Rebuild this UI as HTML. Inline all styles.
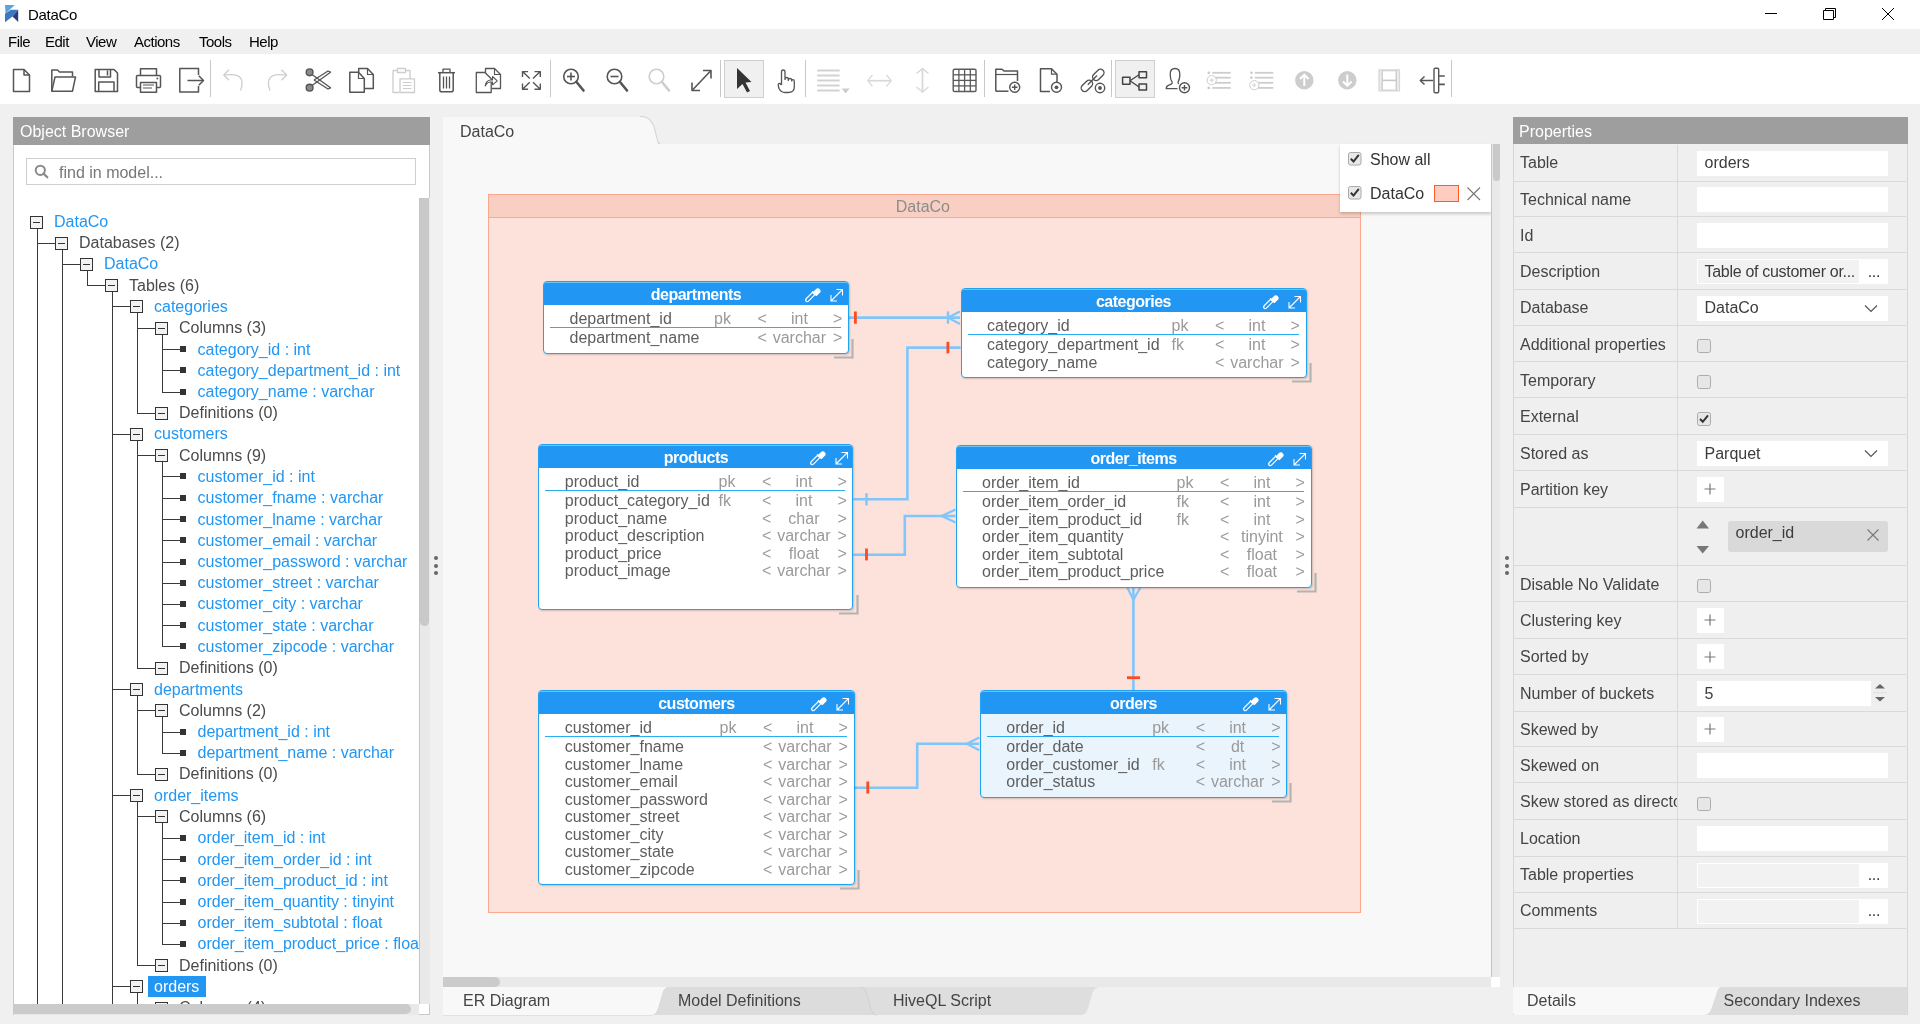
<!DOCTYPE html><html><head><meta charset="utf-8"><title>DataCo</title><style>html,body{margin:0;padding:0;width:1920px;height:1024px;overflow:hidden;background:#f0f0f0;font-family:"Liberation Sans",sans-serif}.r{position:absolute}.t{position:absolute;white-space:nowrap}svg{overflow:visible}</style></head><body><div id="root" style="position:absolute;left:0;top:0;width:1920px;height:1024px;will-change:transform">
<div class="r" style="left:0px;top:0px;width:1920px;height:29px;background:#fff"></div>
<svg class="r" style="left:4px;top:4px" width="18" height="20" viewBox="0 0 18 20">
<polygon points="1,1 10.8,1 1.5,9.5" fill="#5ba3d9"/>
<polygon points="1,9.8 6.8,5.8 14.2,5.8 8.5,12.5 1,18.2" fill="#3a78c0"/>
<polygon points="8.5,12.5 14.2,5.8 14.2,18" fill="#283c78"/>
</svg>
<div class="t" style="left:28px;top:5.00px;font-size:15px;line-height:20px;color:#000;letter-spacing:-0.3px;">DataCo</div>
<svg class="r" style="left:1740px;top:0px" width="180" height="29" viewBox="0 0 180 29">
<path d="M25,13.5 H37" stroke="#000" stroke-width="1"/>
<path d="M83.5,10.5 H93.5 V19.5 H83.5 Z" stroke="#000" stroke-width="1" fill="none"/>
<path d="M85.5,10.5 V8.5 H95.5 V17.5 H93.5" stroke="#000" stroke-width="1" fill="none"/>
<path d="M142,8 L154,20 M154,8 L142,20" stroke="#000" stroke-width="1"/>
</svg>
<div class="r" style="left:0px;top:29px;width:1920px;height:25px;background:#f0f0f0"></div>
<div class="t" style="left:8px;top:32.00px;font-size:15px;line-height:20px;color:#000;letter-spacing:-0.5px;">File</div>
<div class="t" style="left:45px;top:32.00px;font-size:15px;line-height:20px;color:#000;letter-spacing:-0.5px;">Edit</div>
<div class="t" style="left:86px;top:32.00px;font-size:15px;line-height:20px;color:#000;letter-spacing:-0.5px;">View</div>
<div class="t" style="left:134px;top:32.00px;font-size:15px;line-height:20px;color:#000;letter-spacing:-0.5px;">Actions</div>
<div class="t" style="left:199px;top:32.00px;font-size:15px;line-height:20px;color:#000;letter-spacing:-0.5px;">Tools</div>
<div class="t" style="left:249px;top:32.00px;font-size:15px;line-height:20px;color:#000;letter-spacing:-0.5px;">Help</div>
<div class="r" style="left:0px;top:54px;width:1920px;height:50px;background:#fff"></div>
<div class="r" style="left:724px;top:60px;width:40px;height:38px;background:#f0f0f0;border:1px solid #cfcfcf;box-sizing:border-box"></div>
<div class="r" style="left:1115px;top:60px;width:40px;height:38px;background:#f0f0f0;border:1px solid #cfcfcf;box-sizing:border-box"></div>
<svg class="r" style="left:0;top:0" width="1920" height="104" viewBox="0 0 1920 104"><path d="M210.5,60 V97" stroke="#c8c8c8" stroke-width="1"/><path d="M550.5,60 V97" stroke="#c8c8c8" stroke-width="1"/><path d="M720.5,60 V97" stroke="#c8c8c8" stroke-width="1"/><path d="M805.5,60 V97" stroke="#c8c8c8" stroke-width="1"/><path d="M984.5,60 V97" stroke="#c8c8c8" stroke-width="1"/><path d="M1111.5,60 V97" stroke="#c8c8c8" stroke-width="1"/><path d="M1451.5,60 V97" stroke="#c8c8c8" stroke-width="1"/><path d="M13.5,69.5 H24 L29.5,75 V91.5 H13.5 Z" stroke="#555" stroke-width="1.5" fill="none" stroke-linejoin="round" /><path d="M24,69.5 V75 H29.5" stroke="#555" stroke-width="1.5" fill="none" stroke-linejoin="round" /><path d="M51.8,91.2 V70 H57.5 L59.5,72 H72.5 V76.5" stroke="#555" stroke-width="1.5" fill="none" stroke-linejoin="round" /><path d="M51.8,91.2 L55,77 H75.5 L72.5,91.2 Z" stroke="#555" stroke-width="1.5" fill="none" stroke-linejoin="round" /><path d="M95.2,69.5 H114 L117.5,73 V91.5 H95.2 Z" stroke="#555" stroke-width="1.5" fill="none" stroke-linejoin="round" /><path d="M99,69.5 V77 H110.5 V69.5" stroke="#555" stroke-width="1.5" fill="none" stroke-linejoin="round" /><path d="M107.5,70.5 V75.5" stroke="#555" stroke-width="1.5" fill="none" stroke-linejoin="round" /><path d="M98.7,91.5 V82 H114 V91.5" stroke="#555" stroke-width="1.5" fill="none" stroke-linejoin="round" /><path d="M140.5,75 V68.8 H156.5 V75" stroke="#555" stroke-width="1.5" fill="none" stroke-linejoin="round" /><path d="M140.5,87.5 H137.5 Q136.5,87.5 136.5,86.5 V76.5 Q136.5,75.5 137.5,75.5 H159.5 Q160.5,75.5 160.5,76.5 V86.5 Q160.5,87.5 159.5,87.5 H156.5" stroke="#555" stroke-width="1.5" fill="none" stroke-linejoin="round" /><path d="M140.5,82.5 H156.5 V92.3 H140.5 Z" stroke="#555" stroke-width="1.5" fill="none" stroke-linejoin="round" /><path d="M143,85 H154 M143,88 H152" stroke="#555" stroke-width="1.2" fill="none" stroke-linejoin="round" /><circle cx="157.3" cy="78.5" r="0.9" fill="#555"/><path d="M198.5,75 V68.5 H179.8 V92 H198.5 V86" stroke="#555" stroke-width="1.5" fill="none" stroke-linejoin="round" /><path d="M187.5,80.5 H203.2" stroke="#555" stroke-width="1.5" fill="none" stroke-linejoin="round" /><path d="M198.8,75.8 L203.5,80.5 L198.8,85.2" stroke="#555" stroke-width="1.5" fill="none" stroke-linejoin="round" /><path d="M224,75 C232,74.5 242,73 242,83 C242,86 241.5,88.5 240.5,90.5" stroke="#cdcdcd" stroke-width="1.3" fill="none" stroke-linejoin="round" /><path d="M229,69.8 L223.8,75 L229,80.2" stroke="#cdcdcd" stroke-width="1.3" fill="none" stroke-linejoin="round" /><path d="M286.5,75 C278.5,74.5 268.5,73 268.5,83 C268.5,86 269,88.5 270,90.5" stroke="#cdcdcd" stroke-width="1.3" fill="none" stroke-linejoin="round" /><path d="M281.5,69.8 L286.7,75 L281.5,80.2" stroke="#cdcdcd" stroke-width="1.3" fill="none" stroke-linejoin="round" /><path d="M312,74.5 L330.5,87.8 L328,89 L314,80" stroke="#555" stroke-width="1.3" fill="none" stroke-linejoin="round" /><path d="M312,85.5 L330.5,72.2 L328,71 L314,80" stroke="#555" stroke-width="1.3" fill="none" stroke-linejoin="round" /><circle cx="309.6" cy="72.3" r="3.4" stroke="#555" stroke-width="1.4" fill="#8a8a8a"/><circle cx="309.6" cy="87.7" r="3.4" stroke="#555" stroke-width="1.4" fill="#8a8a8a"/><path d="M358.7,72 V68.5 H367.5 L373.3,74.5 V88.5 H364.3" stroke="#555" stroke-width="1.5" fill="none" stroke-linejoin="round" /><path d="M367.5,68.5 V74.5 H373.3" stroke="#555" stroke-width="1.2" fill="none" stroke-linejoin="round" /><path d="M349.8,72.3 H358.5 L364.3,78.5 V92.3 H349.8 Z" stroke="#555" stroke-width="1.5" fill="#fff" stroke-linejoin="round" /><path d="M358.5,72.3 V78.5 H364.3" stroke="#555" stroke-width="1.2" fill="none" stroke-linejoin="round" /><path d="M393,70.5 H397 M406,70.5 H410 V79 M399.5,92.5 H393 V70.5" stroke="#cdcdcd" stroke-width="1.3" fill="none" stroke-linejoin="round" /><path d="M397.5,68.5 H405.5 V72.5 H397.5 Z" stroke="#cdcdcd" stroke-width="1.3" fill="none" stroke-linejoin="round" /><path d="M400,78.8 H414.5 V92.5 H400 Z" stroke="#cdcdcd" stroke-width="1.3" fill="none" stroke-linejoin="round" /><path d="M403,82.5 H411.5 M403,85.5 H411.5 M403,88.5 H411.5" stroke="#cdcdcd" stroke-width="1.1" fill="none" stroke-linejoin="round" /><path d="M438,72.7 H455" stroke="#555" stroke-width="1.5" fill="none" stroke-linejoin="round" /><path d="M443,72.5 V69.2 H450 V72.5" stroke="#555" stroke-width="1.3" fill="none" stroke-linejoin="round" /><path d="M439.8,73 V90 Q439.8,91.8 441.8,91.8 H451.2 Q453.2,91.8 453.2,90 V73" stroke="#555" stroke-width="1.5" fill="none" stroke-linejoin="round" /><path d="M443.5,76.5 V88.5 M446.5,76.5 V88.5 M449.5,76.5 V88.5" stroke="#555" stroke-width="1.3" fill="none" stroke-linejoin="round" /><path d="M485.5,76 V68.5 H494.5 L500.5,74.5 V88.5 H491.5" stroke="#555" stroke-width="1.3" fill="none" stroke-linejoin="round" /><path d="M494.5,68.5 V74.5 H500.5" stroke="#555" stroke-width="1.1" fill="none" stroke-linejoin="round" /><path d="M476.3,72.5 H485 L491.2,78.7 V92.5 H476.3 Z" stroke="#555" stroke-width="1.3" fill="#fff" stroke-linejoin="round" /><path d="M485.2,86 C485.5,82.5 487.2,80.4 490.5,80 H492.5 V76.5 L497.3,80.8 L492.5,84.8 V82 H490.5 C488.2,82.2 486.3,83.6 485.2,86 Z" stroke="#555" stroke-width="1.1" fill="#fff" stroke-linejoin="round" /><path d="M529.8,78.6 L522.8,71.8 M522.5,77 V71.6 H528.1" stroke="#555" stroke-width="1.4" fill="none" stroke-linejoin="round" /><path d="M533,78.6 L540,71.8 M534.5,71.6 H540.3 V77" stroke="#555" stroke-width="1.4" fill="none" stroke-linejoin="round" /><path d="M529.8,82.2 L522.8,89 M522.5,83.6 V89.2 H528.1" stroke="#555" stroke-width="1.4" fill="none" stroke-linejoin="round" /><path d="M533,82.2 L540,89 M534.5,89.2 H540.3 V83.6" stroke="#555" stroke-width="1.4" fill="none" stroke-linejoin="round" /><circle cx="571" cy="76.5" r="7.3" stroke="#555" stroke-width="1.6" fill="none"/><path d="M576.5,82 L583.5,90.5" stroke="#555" stroke-width="2.6" fill="none" stroke-linejoin="round" stroke-linecap="round"/><path d="M567,76.5 H575" stroke="#555" stroke-width="1.6" fill="none" stroke-linejoin="round" /><path d="M571,72.5 V80.5" stroke="#555" stroke-width="1.6" fill="none" stroke-linejoin="round" /><circle cx="614.5" cy="76.5" r="7.3" stroke="#555" stroke-width="1.6" fill="none"/><path d="M620.0,82 L627.0,90.5" stroke="#555" stroke-width="2.6" fill="none" stroke-linejoin="round" stroke-linecap="round"/><path d="M610.5,76.5 H618.5" stroke="#555" stroke-width="1.6" fill="none" stroke-linejoin="round" /><circle cx="656.5" cy="76.5" r="7.3" stroke="#cdcdcd" stroke-width="1.6" fill="none"/><path d="M662.0,82 L669.0,90.5" stroke="#cdcdcd" stroke-width="2.6" fill="none" stroke-linejoin="round" stroke-linecap="round"/><path d="M692.5,90 L710.5,71" stroke="#555" stroke-width="1.6" fill="none" stroke-linejoin="round" /><path d="M703,70.5 H711 V78.5" stroke="#555" stroke-width="1.6" fill="none" stroke-linejoin="round" /><path d="M692,82.5 V90.5 H700" stroke="#555" stroke-width="1.6" fill="none" stroke-linejoin="round" /><path d="M737,68 L751.5,82 L745.5,82.5 L750,91 L747,92.5 L742.5,84 L737,89 Z" fill="#333"/><path d="M781.5,85 V72 Q781.5,70 783.2,70 Q785,70 785,72 V80 M785,79 Q785,77.5 786.7,77.5 Q788.3,77.5 788.3,79.5 V81 M788.3,80 Q788.3,78.5 790,78.5 Q791.7,78.5 791.7,80.5 V81.5 M791.7,81 Q791.7,79.7 793,79.7 Q794.3,79.7 794.3,81.5 V87 Q794.3,92.5 788,92.5 H785 Q781,92.5 779,88.5 L778.3,85.5 Q778,83 780,83.5 L781.5,85" stroke="#555" stroke-width="1.3" fill="none" stroke-linejoin="round" /><path d="M817.2,70.5 H839.6" stroke="#d2d2d2" stroke-width="2" fill="none" stroke-linejoin="round" /><path d="M817.2,75.5 H839.6" stroke="#d2d2d2" stroke-width="2" fill="none" stroke-linejoin="round" /><path d="M817.2,80.5 H839.6" stroke="#d2d2d2" stroke-width="2" fill="none" stroke-linejoin="round" /><path d="M817.2,85.5 H839.6" stroke="#d2d2d2" stroke-width="2" fill="none" stroke-linejoin="round" /><path d="M817.2,90.5 H839.6" stroke="#d2d2d2" stroke-width="2" fill="none" stroke-linejoin="round" /><polygon points="841.6,88.6 849.7,88.6 845.6,93.6" fill="#cdcdcd"/><path d="M868,80.7 H891" stroke="#d8d8d8" stroke-width="1.7" fill="none" stroke-linejoin="round" /><path d="M872.5,75 L867.7,80.7 L872.5,86.3 M886.5,75 L891.3,80.7 L886.5,86.3" stroke="#d8d8d8" stroke-width="1.3" fill="none" stroke-linejoin="round" /><path d="M922.5,68.5 V92.5" stroke="#d8d8d8" stroke-width="1.7" fill="none" stroke-linejoin="round" /><path d="M916.5,73.5 L922.5,68.5 L928.5,73.5 M916.5,87 L922.5,92 L928.5,87" stroke="#d8d8d8" stroke-width="1.3" fill="none" stroke-linejoin="round" /><path d="M953.2,70.5 Q953.2,69.2 954.5,69.2 H974.8 Q976,69.2 976,70.5 V90.2 Q976,91.5 974.8,91.5 H954.5 Q953.2,91.5 953.2,90.2 Z" stroke="#5a5a5a" stroke-width="1.4" fill="none" stroke-linejoin="round" /><path d="M958.9,69.2 V91.5" stroke="#5a5a5a" stroke-width="1.3" fill="none" stroke-linejoin="round" /><path d="M953.2,74.8 H976" stroke="#5a5a5a" stroke-width="1.3" fill="none" stroke-linejoin="round" /><path d="M964.6,69.2 V91.5" stroke="#5a5a5a" stroke-width="1.3" fill="none" stroke-linejoin="round" /><path d="M953.2,80.4 H976" stroke="#5a5a5a" stroke-width="1.3" fill="none" stroke-linejoin="round" /><path d="M970.3,69.2 V91.5" stroke="#5a5a5a" stroke-width="1.3" fill="none" stroke-linejoin="round" /><path d="M953.2,85.9 H976" stroke="#5a5a5a" stroke-width="1.3" fill="none" stroke-linejoin="round" /><path d="M995.8,91.2 V69.2 H1002 L1004,71 H1017.5 V81" stroke="#555" stroke-width="1.5" fill="none" stroke-linejoin="round" /><path d="M995.8,91.2 H1008.5" stroke="#555" stroke-width="1.5" fill="none" stroke-linejoin="round" /><path d="M995.8,74.5 H1017.5" stroke="#555" stroke-width="1.2" fill="none" stroke-linejoin="round" /><circle cx="1014.7" cy="87.3" r="5" stroke="#555" stroke-width="1.4" fill="#fff"/><path d="M1011.9000000000001,87.3 H1017.5 M1014.7,84.5 V90.1" stroke="#555" stroke-width="1.4" fill="none" stroke-linejoin="round" /><path d="M1050,91.5 H1040.5 V68.7 H1051.5 L1057,74.2 V82" stroke="#555" stroke-width="1.5" fill="none" stroke-linejoin="round" /><path d="M1051.5,68.7 V74.2 H1057" stroke="#555" stroke-width="1.2" fill="none" stroke-linejoin="round" /><circle cx="1056.5" cy="87.3" r="5" stroke="#555" stroke-width="1.4" fill="#fff"/><circle cx="1056.5" cy="87.3" r="1.9" fill="#555"/><rect x="-6.6" y="-3.5" width="13.2" height="7" rx="3.5" transform="translate(1098.3,74.9) rotate(-45)" stroke="#555" stroke-width="1.4" fill="none"/><rect x="-6.6" y="-3.5" width="13.2" height="7" rx="3.5" transform="translate(1086.9,85.9) rotate(-45)" stroke="#555" stroke-width="1.4" fill="none"/><path d="M1087.8,84.8 L1097,75.6" stroke="#555" stroke-width="1.4" fill="none" stroke-linejoin="round" /><circle cx="1100" cy="88" r="4.7" stroke="#555" stroke-width="1.4" fill="#fff"/><circle cx="1100" cy="88" r="1.9" fill="#555"/><path d="M1122.6,77.3 H1130 V84.3 H1122.6 Z" stroke="#444" stroke-width="1.5" fill="none" stroke-linejoin="round" /><path d="M1139,71.8 H1146.5 V77.8 H1139 Z" stroke="#444" stroke-width="1.5" fill="none" stroke-linejoin="round" /><path d="M1139,84 H1146.5 V90 H1139 Z" stroke="#444" stroke-width="1.5" fill="none" stroke-linejoin="round" /><path d="M1130,80.8 L1139,74.8 M1130,80.8 L1139,87" stroke="#444" stroke-width="1.3" fill="none" stroke-linejoin="round" /><path d="M1177.5,88.7 H1166.2 Q1166.2,86.2 1168.8,85.2 L1171.3,84.2 Q1172.8,83.3 1172,81.8 Q1170.2,79.3 1170.2,74.2 Q1170.2,68.5 1175,68.5 Q1179.8,68.5 1179.8,74.2 Q1179.8,79.3 1178.2,81.5 Q1177.6,83 1178.8,84" stroke="#555" stroke-width="1.3" fill="none" stroke-linejoin="round" /><circle cx="1184.5" cy="87.7" r="5" stroke="#555" stroke-width="1.4" fill="#fff"/><path d="M1181.7,87.7 H1187.3 M1184.5,84.9 V90.5" stroke="#555" stroke-width="1.4" fill="none" stroke-linejoin="round" /><path d="M1212.2,72.8 H1230.7" stroke="#cdcdcd" stroke-width="1.8" fill="none" stroke-linejoin="round" /><path d="M1212.2,77.7 H1230.7" stroke="#cdcdcd" stroke-width="1.8" fill="none" stroke-linejoin="round" /><path d="M1212.2,82.8 H1230.7" stroke="#cdcdcd" stroke-width="1.8" fill="none" stroke-linejoin="round" /><path d="M1212.2,87.9 H1230.7" stroke="#cdcdcd" stroke-width="1.8" fill="none" stroke-linejoin="round" /><circle cx="1208.8" cy="72.8" r="1.4" fill="#cdcdcd"/><circle cx="1208.8" cy="87.9" r="1.4" fill="#cdcdcd"/><circle cx="1211.7" cy="80.2" r="4.6" stroke="#cdcdcd" stroke-width="1" fill="#fff"/><path d="M1209.7,80.2 H1213.7 M1211.7,78.2 V82.2" stroke="#cdcdcd" stroke-width="0.9" fill="none" stroke-linejoin="round" /><path d="M1254.8,72.8 H1273.3" stroke="#cdcdcd" stroke-width="1.8" fill="none" stroke-linejoin="round" /><path d="M1254.8,77.7 H1273.3" stroke="#cdcdcd" stroke-width="1.8" fill="none" stroke-linejoin="round" /><path d="M1254.8,82.8 H1273.3" stroke="#cdcdcd" stroke-width="1.8" fill="none" stroke-linejoin="round" /><path d="M1254.8,87.9 H1273.3" stroke="#cdcdcd" stroke-width="1.8" fill="none" stroke-linejoin="round" /><circle cx="1251.3999999999999" cy="72.8" r="1.4" fill="#cdcdcd"/><circle cx="1251.3999999999999" cy="77.7" r="1.4" fill="#cdcdcd"/><circle cx="1254.3" cy="85.2" r="4.6" stroke="#cdcdcd" stroke-width="1" fill="#fff"/><path d="M1252.3,85.2 H1256.3 M1254.3,83.2 V87.2" stroke="#cdcdcd" stroke-width="0.9" fill="none" stroke-linejoin="round" /><circle cx="1304.3" cy="80.3" r="9.2" fill="#cdcdcd"/><path d="M1304.3,86 V75 M1300.0,79 L1304.3,74.6 L1308.6,79" stroke="#fff" stroke-width="2" fill="none" stroke-linejoin="round" /><circle cx="1347.3" cy="80.3" r="9.2" fill="#cdcdcd"/><path d="M1347.3,74.6 V85.5 M1343.0,81.5 L1347.3,85.9 L1351.6,81.5" stroke="#fff" stroke-width="2" fill="none" stroke-linejoin="round" /><path d="M1379,69.8 H1399.5 V91 H1379 Z" stroke="#d6d6d6" stroke-width="1.2" fill="#ececec" stroke-linejoin="round" /><path d="M1382,70 V91 M1396.5,70 V91" stroke="#d0d0d0" stroke-width="1" fill="none" stroke-linejoin="round" /><path d="M1382.5,70.8 H1396 V90 H1382.5 Z" stroke="#c8c8c8" stroke-width="0.8" fill="#fff" stroke-linejoin="round" /><path d="M1382.5,80.4 H1396" stroke="#c8c8c8" stroke-width="1.6" fill="none" stroke-linejoin="round" /><path d="M1420.5,80.5 H1433" stroke="#555" stroke-width="1.5" fill="none" stroke-linejoin="round" /><path d="M1424.5,76.5 L1420.3,80.5 L1424.5,84.5" stroke="#555" stroke-width="1.5" fill="none" stroke-linejoin="round" /><path d="M1434,69.5 Q1434,68.3 1435.2,68.3 H1437.5 Q1438.7,68.3 1438.7,69.5 V91.5 Q1438.7,92.7 1437.5,92.7 H1435.2 Q1434,92.7 1434,91.5 Z" stroke="#555" stroke-width="1.4" fill="none" stroke-linejoin="round" /><path d="M1438.7,76 H1444.8 M1438.7,84.4 H1444.8" stroke="#555" stroke-width="1.6" fill="none" stroke-linejoin="round" /></svg>
<div class="r" style="left:13px;top:117px;width:417px;height:898px;background:#fff;border:1px solid #c9c9c9;box-sizing:border-box"></div>
<div class="r" style="left:13px;top:117px;width:417px;height:28px;background:#9e9e9e"></div>
<div class="t" style="left:20px;top:121.00px;font-size:16px;line-height:21px;color:#fff;letter-spacing:0px;">Object Browser</div>
<div class="r" style="left:26px;top:158px;width:390px;height:27px;border:1px solid #cfcfcf;box-sizing:border-box;background:#fff"></div>
<svg class="r" style="left:34px;top:164px" width="16" height="16" viewBox="0 0 16 16"><circle cx="6.3" cy="6.3" r="4.6" stroke="#8a8a8a" stroke-width="2" fill="none"/><path d="M9.6,9.6 L13.3,13.3" stroke="#8a8a8a" stroke-width="2.2" stroke-linecap="round"/></svg>
<div class="t" style="left:59px;top:162.00px;font-size:16px;line-height:21px;color:#777;letter-spacing:0px;">find in model...</div>
<div class="r" style="left:14px;top:198px;width:405px;height:806px;overflow:hidden"><svg class="r" style="left:-14px;top:-198px" width="430" height="1010" viewBox="0 0 430 1010"><path d="M37.5,229 V1004" stroke="#3a3a3a" stroke-width="1" fill="none"/><path d="M62.5,250 V1004" stroke="#3a3a3a" stroke-width="1" fill="none"/><path d="M87.5,271 V285.5" stroke="#3a3a3a" stroke-width="1" fill="none"/><path d="M112.5,292 V1004" stroke="#3a3a3a" stroke-width="1" fill="none"/><path d="M137.5,313 V413.5" stroke="#3a3a3a" stroke-width="1" fill="none"/><path d="M162.5,335 V392.5" stroke="#3a3a3a" stroke-width="1" fill="none"/><path d="M137.5,441 V668.5" stroke="#3a3a3a" stroke-width="1" fill="none"/><path d="M162.5,462 V646.5" stroke="#3a3a3a" stroke-width="1" fill="none"/><path d="M137.5,696 V774.5" stroke="#3a3a3a" stroke-width="1" fill="none"/><path d="M162.5,717 V753.5" stroke="#3a3a3a" stroke-width="1" fill="none"/><path d="M137.5,802 V965.5" stroke="#3a3a3a" stroke-width="1" fill="none"/><path d="M162.5,823 V944.5" stroke="#3a3a3a" stroke-width="1" fill="none"/><path d="M137.5,993 V1004" stroke="#3a3a3a" stroke-width="1" fill="none"/><path d="M162.5,1015 V1004" stroke="#3a3a3a" stroke-width="1" fill="none"/><rect x="30.5" y="216.5" width="12" height="12" fill="#f2f2f2" stroke="#333" stroke-width="1"/><path d="M33,222.5 H40" stroke="#333" stroke-width="1"/><path d="M37,243.5 H55" stroke="#3a3a3a" stroke-width="1" fill="none"/><rect x="55.5" y="237.5" width="12" height="12" fill="#f2f2f2" stroke="#333" stroke-width="1"/><path d="M58,243.5 H65" stroke="#333" stroke-width="1"/><path d="M62,264.5 H80" stroke="#3a3a3a" stroke-width="1" fill="none"/><rect x="80.5" y="258.5" width="12" height="12" fill="#f2f2f2" stroke="#333" stroke-width="1"/><path d="M83,264.5 H90" stroke="#333" stroke-width="1"/><path d="M87,285.5 H105" stroke="#3a3a3a" stroke-width="1" fill="none"/><rect x="105.5" y="279.5" width="12" height="12" fill="#f2f2f2" stroke="#333" stroke-width="1"/><path d="M108,285.5 H115" stroke="#333" stroke-width="1"/><path d="M112,306.5 H130" stroke="#3a3a3a" stroke-width="1" fill="none"/><rect x="130.5" y="300.5" width="12" height="12" fill="#f2f2f2" stroke="#333" stroke-width="1"/><path d="M133,306.5 H140" stroke="#333" stroke-width="1"/><path d="M137,328.5 H155" stroke="#3a3a3a" stroke-width="1" fill="none"/><rect x="155.5" y="322.5" width="12" height="12" fill="#f2f2f2" stroke="#333" stroke-width="1"/><path d="M158,328.5 H165" stroke="#333" stroke-width="1"/><path d="M162,349.5 H180" stroke="#3a3a3a" stroke-width="1" fill="none"/><rect x="180" y="346" width="6" height="6" fill="#333"/><path d="M162,370.5 H180" stroke="#3a3a3a" stroke-width="1" fill="none"/><rect x="180" y="367" width="6" height="6" fill="#333"/><path d="M162,392.5 H180" stroke="#3a3a3a" stroke-width="1" fill="none"/><rect x="180" y="389" width="6" height="6" fill="#333"/><path d="M137,413.5 H155" stroke="#3a3a3a" stroke-width="1" fill="none"/><rect x="155.5" y="407.5" width="12" height="12" fill="#f2f2f2" stroke="#333" stroke-width="1"/><path d="M158,413.5 H165" stroke="#333" stroke-width="1"/><path d="M112,434.5 H130" stroke="#3a3a3a" stroke-width="1" fill="none"/><rect x="130.5" y="428.5" width="12" height="12" fill="#f2f2f2" stroke="#333" stroke-width="1"/><path d="M133,434.5 H140" stroke="#333" stroke-width="1"/><path d="M137,455.5 H155" stroke="#3a3a3a" stroke-width="1" fill="none"/><rect x="155.5" y="449.5" width="12" height="12" fill="#f2f2f2" stroke="#333" stroke-width="1"/><path d="M158,455.5 H165" stroke="#333" stroke-width="1"/><path d="M162,476.5 H180" stroke="#3a3a3a" stroke-width="1" fill="none"/><rect x="180" y="473" width="6" height="6" fill="#333"/><path d="M162,498.5 H180" stroke="#3a3a3a" stroke-width="1" fill="none"/><rect x="180" y="495" width="6" height="6" fill="#333"/><path d="M162,519.5 H180" stroke="#3a3a3a" stroke-width="1" fill="none"/><rect x="180" y="516" width="6" height="6" fill="#333"/><path d="M162,540.5 H180" stroke="#3a3a3a" stroke-width="1" fill="none"/><rect x="180" y="537" width="6" height="6" fill="#333"/><path d="M162,562.5 H180" stroke="#3a3a3a" stroke-width="1" fill="none"/><rect x="180" y="559" width="6" height="6" fill="#333"/><path d="M162,583.5 H180" stroke="#3a3a3a" stroke-width="1" fill="none"/><rect x="180" y="580" width="6" height="6" fill="#333"/><path d="M162,604.5 H180" stroke="#3a3a3a" stroke-width="1" fill="none"/><rect x="180" y="601" width="6" height="6" fill="#333"/><path d="M162,625.5 H180" stroke="#3a3a3a" stroke-width="1" fill="none"/><rect x="180" y="622" width="6" height="6" fill="#333"/><path d="M162,646.5 H180" stroke="#3a3a3a" stroke-width="1" fill="none"/><rect x="180" y="643" width="6" height="6" fill="#333"/><path d="M137,668.5 H155" stroke="#3a3a3a" stroke-width="1" fill="none"/><rect x="155.5" y="662.5" width="12" height="12" fill="#f2f2f2" stroke="#333" stroke-width="1"/><path d="M158,668.5 H165" stroke="#333" stroke-width="1"/><path d="M112,689.5 H130" stroke="#3a3a3a" stroke-width="1" fill="none"/><rect x="130.5" y="683.5" width="12" height="12" fill="#f2f2f2" stroke="#333" stroke-width="1"/><path d="M133,689.5 H140" stroke="#333" stroke-width="1"/><path d="M137,710.5 H155" stroke="#3a3a3a" stroke-width="1" fill="none"/><rect x="155.5" y="704.5" width="12" height="12" fill="#f2f2f2" stroke="#333" stroke-width="1"/><path d="M158,710.5 H165" stroke="#333" stroke-width="1"/><path d="M162,732.5 H180" stroke="#3a3a3a" stroke-width="1" fill="none"/><rect x="180" y="729" width="6" height="6" fill="#333"/><path d="M162,753.5 H180" stroke="#3a3a3a" stroke-width="1" fill="none"/><rect x="180" y="750" width="6" height="6" fill="#333"/><path d="M137,774.5 H155" stroke="#3a3a3a" stroke-width="1" fill="none"/><rect x="155.5" y="768.5" width="12" height="12" fill="#f2f2f2" stroke="#333" stroke-width="1"/><path d="M158,774.5 H165" stroke="#333" stroke-width="1"/><path d="M112,795.5 H130" stroke="#3a3a3a" stroke-width="1" fill="none"/><rect x="130.5" y="789.5" width="12" height="12" fill="#f2f2f2" stroke="#333" stroke-width="1"/><path d="M133,795.5 H140" stroke="#333" stroke-width="1"/><path d="M137,816.5 H155" stroke="#3a3a3a" stroke-width="1" fill="none"/><rect x="155.5" y="810.5" width="12" height="12" fill="#f2f2f2" stroke="#333" stroke-width="1"/><path d="M158,816.5 H165" stroke="#333" stroke-width="1"/><path d="M162,838.5 H180" stroke="#3a3a3a" stroke-width="1" fill="none"/><rect x="180" y="835" width="6" height="6" fill="#333"/><path d="M162,859.5 H180" stroke="#3a3a3a" stroke-width="1" fill="none"/><rect x="180" y="856" width="6" height="6" fill="#333"/><path d="M162,880.5 H180" stroke="#3a3a3a" stroke-width="1" fill="none"/><rect x="180" y="877" width="6" height="6" fill="#333"/><path d="M162,902.5 H180" stroke="#3a3a3a" stroke-width="1" fill="none"/><rect x="180" y="899" width="6" height="6" fill="#333"/><path d="M162,923.5 H180" stroke="#3a3a3a" stroke-width="1" fill="none"/><rect x="180" y="920" width="6" height="6" fill="#333"/><path d="M162,944.5 H180" stroke="#3a3a3a" stroke-width="1" fill="none"/><rect x="180" y="941" width="6" height="6" fill="#333"/><path d="M137,965.5 H155" stroke="#3a3a3a" stroke-width="1" fill="none"/><rect x="155.5" y="959.5" width="12" height="12" fill="#f2f2f2" stroke="#333" stroke-width="1"/><path d="M158,965.5 H165" stroke="#333" stroke-width="1"/><path d="M112,986.5 H130" stroke="#3a3a3a" stroke-width="1" fill="none"/><rect x="130.5" y="980.5" width="12" height="12" fill="#f2f2f2" stroke="#333" stroke-width="1"/><path d="M133,986.5 H140" stroke="#333" stroke-width="1"/><path d="M137,1008.5 H155" stroke="#3a3a3a" stroke-width="1" fill="none"/><rect x="155.5" y="1002.5" width="12" height="12" fill="#f2f2f2" stroke="#333" stroke-width="1"/><path d="M158,1008.5 H165" stroke="#333" stroke-width="1"/></svg>
<div class="t" style="left:40px;top:13.00px;font-size:16px;line-height:21px;color:#2196f3;letter-spacing:0px">DataCo</div>
<div class="t" style="left:65px;top:34.00px;font-size:16px;line-height:21px;color:#4a4a4a;letter-spacing:0px">Databases (2)</div>
<div class="t" style="left:90px;top:55.00px;font-size:16px;line-height:21px;color:#2196f3;letter-spacing:0px">DataCo</div>
<div class="t" style="left:115px;top:77.00px;font-size:16px;line-height:21px;color:#4a4a4a;letter-spacing:0px">Tables (6)</div>
<div class="t" style="left:140px;top:98.00px;font-size:16px;line-height:21px;color:#2196f3;letter-spacing:0px">categories</div>
<div class="t" style="left:165px;top:119.00px;font-size:16px;line-height:21px;color:#4a4a4a;letter-spacing:0px">Columns (3)</div>
<div class="t" style="left:183.5px;top:141.00px;font-size:16px;line-height:21px;color:#2196f3;letter-spacing:0px">category_id : int</div>
<div class="t" style="left:183.5px;top:162.00px;font-size:16px;line-height:21px;color:#2196f3;letter-spacing:0px">category_department_id : int</div>
<div class="t" style="left:183.5px;top:183.00px;font-size:16px;line-height:21px;color:#2196f3;letter-spacing:0px">category_name : varchar</div>
<div class="t" style="left:165px;top:204.00px;font-size:16px;line-height:21px;color:#4a4a4a;letter-spacing:0px">Definitions (0)</div>
<div class="t" style="left:140px;top:225.00px;font-size:16px;line-height:21px;color:#2196f3;letter-spacing:0px">customers</div>
<div class="t" style="left:165px;top:247.00px;font-size:16px;line-height:21px;color:#4a4a4a;letter-spacing:0px">Columns (9)</div>
<div class="t" style="left:183.5px;top:268.00px;font-size:16px;line-height:21px;color:#2196f3;letter-spacing:0px">customer_id : int</div>
<div class="t" style="left:183.5px;top:289.00px;font-size:16px;line-height:21px;color:#2196f3;letter-spacing:0px">customer_fname : varchar</div>
<div class="t" style="left:183.5px;top:311.00px;font-size:16px;line-height:21px;color:#2196f3;letter-spacing:0px">customer_lname : varchar</div>
<div class="t" style="left:183.5px;top:332.00px;font-size:16px;line-height:21px;color:#2196f3;letter-spacing:0px">customer_email : varchar</div>
<div class="t" style="left:183.5px;top:353.00px;font-size:16px;line-height:21px;color:#2196f3;letter-spacing:0px">customer_password : varchar</div>
<div class="t" style="left:183.5px;top:374.00px;font-size:16px;line-height:21px;color:#2196f3;letter-spacing:0px">customer_street : varchar</div>
<div class="t" style="left:183.5px;top:395.00px;font-size:16px;line-height:21px;color:#2196f3;letter-spacing:0px">customer_city : varchar</div>
<div class="t" style="left:183.5px;top:417.00px;font-size:16px;line-height:21px;color:#2196f3;letter-spacing:0px">customer_state : varchar</div>
<div class="t" style="left:183.5px;top:438.00px;font-size:16px;line-height:21px;color:#2196f3;letter-spacing:0px">customer_zipcode : varchar</div>
<div class="t" style="left:165px;top:459.00px;font-size:16px;line-height:21px;color:#4a4a4a;letter-spacing:0px">Definitions (0)</div>
<div class="t" style="left:140px;top:481.00px;font-size:16px;line-height:21px;color:#2196f3;letter-spacing:0px">departments</div>
<div class="t" style="left:165px;top:502.00px;font-size:16px;line-height:21px;color:#4a4a4a;letter-spacing:0px">Columns (2)</div>
<div class="t" style="left:183.5px;top:523.00px;font-size:16px;line-height:21px;color:#2196f3;letter-spacing:0px">department_id : int</div>
<div class="t" style="left:183.5px;top:544.00px;font-size:16px;line-height:21px;color:#2196f3;letter-spacing:0px">department_name : varchar</div>
<div class="t" style="left:165px;top:565.00px;font-size:16px;line-height:21px;color:#4a4a4a;letter-spacing:0px">Definitions (0)</div>
<div class="t" style="left:140px;top:587.00px;font-size:16px;line-height:21px;color:#2196f3;letter-spacing:0px">order_items</div>
<div class="t" style="left:165px;top:608.00px;font-size:16px;line-height:21px;color:#4a4a4a;letter-spacing:0px">Columns (6)</div>
<div class="t" style="left:183.5px;top:629.00px;font-size:16px;line-height:21px;color:#2196f3;letter-spacing:0px">order_item_id : int</div>
<div class="t" style="left:183.5px;top:651.00px;font-size:16px;line-height:21px;color:#2196f3;letter-spacing:0px">order_item_order_id : int</div>
<div class="t" style="left:183.5px;top:672.00px;font-size:16px;line-height:21px;color:#2196f3;letter-spacing:0px">order_item_product_id : int</div>
<div class="t" style="left:183.5px;top:693.00px;font-size:16px;line-height:21px;color:#2196f3;letter-spacing:0px">order_item_quantity : tinyint</div>
<div class="t" style="left:183.5px;top:714.00px;font-size:16px;line-height:21px;color:#2196f3;letter-spacing:0px">order_item_subtotal : float</div>
<div class="t" style="left:183.5px;top:735.00px;font-size:16px;line-height:21px;color:#2196f3;letter-spacing:0px">order_item_product_price : float</div>
<div class="t" style="left:165px;top:757.00px;font-size:16px;line-height:21px;color:#4a4a4a;letter-spacing:0px">Definitions (0)</div>
<div class="r" style="left:134px;top:778px;width:58px;height:20.6px;background:#2196f3"></div>
<div class="t" style="left:140px;top:778.00px;font-size:16px;line-height:21px;color:#fff;letter-spacing:0px">orders</div>
<div class="t" style="left:165px;top:799.00px;font-size:16px;line-height:21px;color:#4a4a4a;letter-spacing:0px">Columns (4)</div>
</div>
<div class="r" style="left:419px;top:198px;width:11px;height:806px;background:#e9e9e9;border-left:1px solid #c4c4c4;box-sizing:border-box"></div>
<div class="r" style="left:420px;top:198px;width:9px;height:428px;background:#c9c9c9;border-radius:0 0 5px 5px"></div>
<div class="r" style="left:14px;top:1004px;width:405px;height:11px;background:#e9e9e9"></div>
<div class="r" style="left:14px;top:1004px;width:397px;height:10px;background:#cbcbcb;border-radius:0 5px 5px 0"></div>
<div class="r" style="left:419px;top:1004px;width:10px;height:10px;background:#fff"></div>
<div class="r" style="left:434px;top:556px;width:4px;height:4px;background:#666;border-radius:50%"></div>
<div class="r" style="left:434px;top:563.5px;width:4px;height:4px;background:#666;border-radius:50%"></div>
<div class="r" style="left:434px;top:571px;width:4px;height:4px;background:#666;border-radius:50%"></div>
<svg class="r" style="left:443px;top:116px" width="240" height="30" viewBox="0 0 240 30"><path d="M197,1 C205,1 208,5 210.5,11 L213.5,23 C214.5,26.5 215.5,28 217,28.5" stroke="rgba(0,0,0,0.10)" stroke-width="2.4" fill="none"/><path d="M0,1 H197 C205,1 208,5 210.5,11 L213.5,23 C214.3,26 214.8,28 215.5,29 H0 Z" fill="#f8f8f8"/></svg>
<div class="t" style="left:460px;top:121.00px;font-size:16px;line-height:21px;color:#444;letter-spacing:0px;">DataCo</div>
<div class="r" style="left:443px;top:144px;width:1057px;height:833px;background:#f8f8f8"></div>
<div class="r" style="left:488px;top:194px;width:873px;height:718.5px;background:#fce2db;border:1px solid #fba88e;box-sizing:border-box"></div>
<div class="r" style="left:489px;top:195px;width:871px;height:22.5px;background:#f9cfc3;border-bottom:1px solid #fba88e;box-sizing:border-box"></div>
<div class="t" style="left:750px;width:200px;text-align:right;top:196.00px;font-size:16px;line-height:21px;color:#8c8c8c;letter-spacing:0px;">DataCo</div>
<svg class="r" style="left:0;top:0" width="1500" height="1000" viewBox="0 0 1500 1000"><path d="M849,317.6 H960" stroke="#80c6fb" stroke-width="2.6" fill="none"/><path d="M855.4,311.5 V323.7" stroke="#ff4a1c" stroke-width="2.8" fill="none"/><path d="M948,311.4 V323.7" stroke="#80c6fb" stroke-width="2.4" fill="none"/><path d="M948,317.6 L960,311.4 M948,317.6 L960,324" stroke="#80c6fb" stroke-width="2.2" fill="none"/><path d="M853.5,499.3 H907.4 V347.6 H960.5" stroke="#80c6fb" stroke-width="2.6" fill="none"/><path d="M947.9,341.8 V353.4" stroke="#ff4a1c" stroke-width="2.8" fill="none"/><path d="M866.5,493.2 V505.5" stroke="#80c6fb" stroke-width="2.4" fill="none"/><path d="M853.5,554.7 H904.8 V516 H955.5" stroke="#80c6fb" stroke-width="2.6" fill="none"/><path d="M866.5,548.5 V560.4" stroke="#ff4a1c" stroke-width="2.8" fill="none"/><path d="M941.7,516 L955.5,509.4 M941.7,516 L955.5,522.6" stroke="#80c6fb" stroke-width="2.2" fill="none"/><path d="M1133.4,587.5 V690.6" stroke="#80c6fb" stroke-width="2.6" fill="none"/><path d="M1127,677.7 H1140" stroke="#ff4a1c" stroke-width="2.8" fill="none"/><path d="M1133.4,599.8 L1127.3,587.5 M1133.4,599.8 L1140.4,587.5" stroke="#80c6fb" stroke-width="2.2" fill="none"/><path d="M854.5,787.7 H917.2 V743.7 H979.3" stroke="#80c6fb" stroke-width="2.6" fill="none"/><path d="M867.8,781.5 V793.6" stroke="#ff4a1c" stroke-width="2.8" fill="none"/><path d="M966.7,743.7 L979.3,737.6 M966.7,743.7 L979.3,750.3" stroke="#80c6fb" stroke-width="2.2" fill="none"/></svg>
<div class="r" style="left:543px;top:281px;width:306px;height:73.39999999999998px;background:#fff;border:1.3px solid #1ea4f0;border-radius:4px;box-sizing:border-box;box-shadow:1px 1px 2px rgba(0,0,0,0.18);overflow:hidden"><div class="r" style="left:0;top:0;width:100%;height:22.5px;background:#2196f3;border-top:1.5px solid #6cc4f2;box-sizing:border-box"></div></div>
<div class="t" style="left:596.0px;top:284px;width:200px;text-align:center;font-size:16px;line-height:21px;font-weight:bold;color:#fff;letter-spacing:-0.5px">departments</div>
<svg class="r" style="left:804px;top:286.5px" width="40" height="16" viewBox="0 0 40 16"><path d="M2.2,14.3 C1.3,13.4 1.6,12.3 2.4,11.5 L8.6,5.3 L10.9,7.6 L4.7,13.8 C3.9,14.6 2.9,14.9 2.2,14.3 Z" stroke="#fff" stroke-width="1.2" fill="none"/><path d="M8,4.5 L11.8,8.3 M9.5,5.5 L12.3,2.7 C13.2,1.8 14.6,1.8 15.3,2.6 C16.1,3.4 16.1,4.7 15.2,5.6 L12.4,8.4 Z" stroke="#fff" stroke-width="1.3" fill="#fff"/><path d="M27,14 L38.5,2.5 M32.5,2.5 H38.5 V8.5 M27,8 V14 H33" stroke="#fff" stroke-width="1.1" fill="none"/></svg>
<div class="r" style="left:550px;top:326.9px;width:291px;height:1.3px;background:#28aef2"></div>
<div class="t" style="left:569.5px;top:308.00px;font-size:16px;line-height:21px;color:#5e5e5e;letter-spacing:0px;">department_id</div>
<div class="t" style="left:714px;top:308.00px;font-size:16px;line-height:21px;color:#9a9a9a;letter-spacing:0px;">pk</div>
<div class="t" style="left:757.5px;top:308.00px;font-size:16px;line-height:21px;color:#9a9a9a;letter-spacing:0px;">&lt;</div>
<div class="t" style="left:759.4px;width:80px;text-align:center;top:308.00px;font-size:16px;line-height:21px;color:#9a9a9a;letter-spacing:0px;">int</div>
<div class="t" style="left:833px;top:308.00px;font-size:16px;line-height:21px;color:#9a9a9a;letter-spacing:0px;">&gt;</div>
<div class="t" style="left:569.5px;top:327.00px;font-size:16px;line-height:21px;color:#5e5e5e;letter-spacing:0px;">department_name</div>
<div class="t" style="left:757.5px;top:327.00px;font-size:16px;line-height:21px;color:#9a9a9a;letter-spacing:0px;">&lt;</div>
<div class="t" style="left:759.4px;width:80px;text-align:center;top:327.00px;font-size:16px;line-height:21px;color:#9a9a9a;letter-spacing:0px;">varchar</div>
<div class="t" style="left:833px;top:327.00px;font-size:16px;line-height:21px;color:#9a9a9a;letter-spacing:0px;">&gt;</div>
<svg class="r" style="left:833px;top:338.4px" width="22" height="22" viewBox="0 0 22 22"><path d="M19.5,1 V19.5 H1" stroke="#b3b3b3" stroke-width="2.2" fill="none"/></svg>
<div class="r" style="left:960.5px;top:288px;width:346.0px;height:89.5px;background:#fff;border:1.3px solid #1ea4f0;border-radius:4px;box-sizing:border-box;box-shadow:1px 1px 2px rgba(0,0,0,0.18);overflow:hidden"><div class="r" style="left:0;top:0;width:100%;height:22.5px;background:#2196f3;border-top:1.5px solid #6cc4f2;box-sizing:border-box"></div></div>
<div class="t" style="left:1033.5px;top:291px;width:200px;text-align:center;font-size:16px;line-height:21px;font-weight:bold;color:#fff;letter-spacing:-0.5px">categories</div>
<svg class="r" style="left:1261.5px;top:293.5px" width="40" height="16" viewBox="0 0 40 16"><path d="M2.2,14.3 C1.3,13.4 1.6,12.3 2.4,11.5 L8.6,5.3 L10.9,7.6 L4.7,13.8 C3.9,14.6 2.9,14.9 2.2,14.3 Z" stroke="#fff" stroke-width="1.2" fill="none"/><path d="M8,4.5 L11.8,8.3 M9.5,5.5 L12.3,2.7 C13.2,1.8 14.6,1.8 15.3,2.6 C16.1,3.4 16.1,4.7 15.2,5.6 L12.4,8.4 Z" stroke="#fff" stroke-width="1.3" fill="#fff"/><path d="M27,14 L38.5,2.5 M32.5,2.5 H38.5 V8.5 M27,8 V14 H33" stroke="#fff" stroke-width="1.1" fill="none"/></svg>
<div class="r" style="left:967.5px;top:333.9px;width:331.0px;height:1.3px;background:#28aef2"></div>
<div class="t" style="left:987.0px;top:315.00px;font-size:16px;line-height:21px;color:#5e5e5e;letter-spacing:0px;">category_id</div>
<div class="t" style="left:1171.5px;top:315.00px;font-size:16px;line-height:21px;color:#9a9a9a;letter-spacing:0px;">pk</div>
<div class="t" style="left:1215.0px;top:315.00px;font-size:16px;line-height:21px;color:#9a9a9a;letter-spacing:0px;">&lt;</div>
<div class="t" style="left:1216.9px;width:80px;text-align:center;top:315.00px;font-size:16px;line-height:21px;color:#9a9a9a;letter-spacing:0px;">int</div>
<div class="t" style="left:1290.5px;top:315.00px;font-size:16px;line-height:21px;color:#9a9a9a;letter-spacing:0px;">&gt;</div>
<div class="t" style="left:987.0px;top:334.00px;font-size:16px;line-height:21px;color:#5e5e5e;letter-spacing:0px;">category_department_id</div>
<div class="t" style="left:1171.5px;top:334.00px;font-size:16px;line-height:21px;color:#9a9a9a;letter-spacing:0px;">fk</div>
<div class="t" style="left:1215.0px;top:334.00px;font-size:16px;line-height:21px;color:#9a9a9a;letter-spacing:0px;">&lt;</div>
<div class="t" style="left:1216.9px;width:80px;text-align:center;top:334.00px;font-size:16px;line-height:21px;color:#9a9a9a;letter-spacing:0px;">int</div>
<div class="t" style="left:1290.5px;top:334.00px;font-size:16px;line-height:21px;color:#9a9a9a;letter-spacing:0px;">&gt;</div>
<div class="t" style="left:987.0px;top:352.00px;font-size:16px;line-height:21px;color:#5e5e5e;letter-spacing:0px;">category_name</div>
<div class="t" style="left:1215.0px;top:352.00px;font-size:16px;line-height:21px;color:#9a9a9a;letter-spacing:0px;">&lt;</div>
<div class="t" style="left:1216.9px;width:80px;text-align:center;top:352.00px;font-size:16px;line-height:21px;color:#9a9a9a;letter-spacing:0px;">varchar</div>
<div class="t" style="left:1290.5px;top:352.00px;font-size:16px;line-height:21px;color:#9a9a9a;letter-spacing:0px;">&gt;</div>
<svg class="r" style="left:1290.5px;top:361.5px" width="22" height="22" viewBox="0 0 22 22"><path d="M19.5,1 V19.5 H1" stroke="#b3b3b3" stroke-width="2.2" fill="none"/></svg>
<div class="r" style="left:538.3px;top:444px;width:315.20000000000005px;height:165.5px;background:#fff;border:1.3px solid #1ea4f0;border-radius:4px;box-sizing:border-box;box-shadow:1px 1px 2px rgba(0,0,0,0.18);overflow:hidden"><div class="r" style="left:0;top:0;width:100%;height:22.5px;background:#2196f3;border-top:1.5px solid #6cc4f2;box-sizing:border-box"></div></div>
<div class="t" style="left:595.9px;top:447px;width:200px;text-align:center;font-size:16px;line-height:21px;font-weight:bold;color:#fff;letter-spacing:-0.5px">products</div>
<svg class="r" style="left:808.5px;top:449.5px" width="40" height="16" viewBox="0 0 40 16"><path d="M2.2,14.3 C1.3,13.4 1.6,12.3 2.4,11.5 L8.6,5.3 L10.9,7.6 L4.7,13.8 C3.9,14.6 2.9,14.9 2.2,14.3 Z" stroke="#fff" stroke-width="1.2" fill="none"/><path d="M8,4.5 L11.8,8.3 M9.5,5.5 L12.3,2.7 C13.2,1.8 14.6,1.8 15.3,2.6 C16.1,3.4 16.1,4.7 15.2,5.6 L12.4,8.4 Z" stroke="#fff" stroke-width="1.3" fill="#fff"/><path d="M27,14 L38.5,2.5 M32.5,2.5 H38.5 V8.5 M27,8 V14 H33" stroke="#fff" stroke-width="1.1" fill="none"/></svg>
<div class="r" style="left:545.3px;top:489.9px;width:300.20000000000005px;height:1.3px;background:#28aef2"></div>
<div class="t" style="left:564.8px;top:471.00px;font-size:16px;line-height:21px;color:#5e5e5e;letter-spacing:0px;">product_id</div>
<div class="t" style="left:718.5px;top:471.00px;font-size:16px;line-height:21px;color:#9a9a9a;letter-spacing:0px;">pk</div>
<div class="t" style="left:762.0px;top:471.00px;font-size:16px;line-height:21px;color:#9a9a9a;letter-spacing:0px;">&lt;</div>
<div class="t" style="left:763.9px;width:80px;text-align:center;top:471.00px;font-size:16px;line-height:21px;color:#9a9a9a;letter-spacing:0px;">int</div>
<div class="t" style="left:837.5px;top:471.00px;font-size:16px;line-height:21px;color:#9a9a9a;letter-spacing:0px;">&gt;</div>
<div class="t" style="left:564.8px;top:490.00px;font-size:16px;line-height:21px;color:#5e5e5e;letter-spacing:0px;">product_category_id</div>
<div class="t" style="left:718.5px;top:490.00px;font-size:16px;line-height:21px;color:#9a9a9a;letter-spacing:0px;">fk</div>
<div class="t" style="left:762.0px;top:490.00px;font-size:16px;line-height:21px;color:#9a9a9a;letter-spacing:0px;">&lt;</div>
<div class="t" style="left:763.9px;width:80px;text-align:center;top:490.00px;font-size:16px;line-height:21px;color:#9a9a9a;letter-spacing:0px;">int</div>
<div class="t" style="left:837.5px;top:490.00px;font-size:16px;line-height:21px;color:#9a9a9a;letter-spacing:0px;">&gt;</div>
<div class="t" style="left:564.8px;top:508.00px;font-size:16px;line-height:21px;color:#5e5e5e;letter-spacing:0px;">product_name</div>
<div class="t" style="left:762.0px;top:508.00px;font-size:16px;line-height:21px;color:#9a9a9a;letter-spacing:0px;">&lt;</div>
<div class="t" style="left:763.9px;width:80px;text-align:center;top:508.00px;font-size:16px;line-height:21px;color:#9a9a9a;letter-spacing:0px;">char</div>
<div class="t" style="left:837.5px;top:508.00px;font-size:16px;line-height:21px;color:#9a9a9a;letter-spacing:0px;">&gt;</div>
<div class="t" style="left:564.8px;top:525.00px;font-size:16px;line-height:21px;color:#5e5e5e;letter-spacing:0px;">product_description</div>
<div class="t" style="left:762.0px;top:525.00px;font-size:16px;line-height:21px;color:#9a9a9a;letter-spacing:0px;">&lt;</div>
<div class="t" style="left:763.9px;width:80px;text-align:center;top:525.00px;font-size:16px;line-height:21px;color:#9a9a9a;letter-spacing:0px;">varchar</div>
<div class="t" style="left:837.5px;top:525.00px;font-size:16px;line-height:21px;color:#9a9a9a;letter-spacing:0px;">&gt;</div>
<div class="t" style="left:564.8px;top:543.00px;font-size:16px;line-height:21px;color:#5e5e5e;letter-spacing:0px;">product_price</div>
<div class="t" style="left:762.0px;top:543.00px;font-size:16px;line-height:21px;color:#9a9a9a;letter-spacing:0px;">&lt;</div>
<div class="t" style="left:763.9px;width:80px;text-align:center;top:543.00px;font-size:16px;line-height:21px;color:#9a9a9a;letter-spacing:0px;">float</div>
<div class="t" style="left:837.5px;top:543.00px;font-size:16px;line-height:21px;color:#9a9a9a;letter-spacing:0px;">&gt;</div>
<div class="t" style="left:564.8px;top:560.00px;font-size:16px;line-height:21px;color:#5e5e5e;letter-spacing:0px;">product_image</div>
<div class="t" style="left:762.0px;top:560.00px;font-size:16px;line-height:21px;color:#9a9a9a;letter-spacing:0px;">&lt;</div>
<div class="t" style="left:763.9px;width:80px;text-align:center;top:560.00px;font-size:16px;line-height:21px;color:#9a9a9a;letter-spacing:0px;">varchar</div>
<div class="t" style="left:837.5px;top:560.00px;font-size:16px;line-height:21px;color:#9a9a9a;letter-spacing:0px;">&gt;</div>
<svg class="r" style="left:837.5px;top:593.5px" width="22" height="22" viewBox="0 0 22 22"><path d="M19.5,1 V19.5 H1" stroke="#b3b3b3" stroke-width="2.2" fill="none"/></svg>
<div class="r" style="left:955.5px;top:445px;width:356.0px;height:142.70000000000005px;background:#fff;border:1.3px solid #1ea4f0;border-radius:4px;box-sizing:border-box;box-shadow:1px 1px 2px rgba(0,0,0,0.18);overflow:hidden"><div class="r" style="left:0;top:0;width:100%;height:22.5px;background:#2196f3;border-top:1.5px solid #6cc4f2;box-sizing:border-box"></div></div>
<div class="t" style="left:1033.5px;top:448px;width:200px;text-align:center;font-size:16px;line-height:21px;font-weight:bold;color:#fff;letter-spacing:-0.5px">order_items</div>
<svg class="r" style="left:1266.5px;top:450.5px" width="40" height="16" viewBox="0 0 40 16"><path d="M2.2,14.3 C1.3,13.4 1.6,12.3 2.4,11.5 L8.6,5.3 L10.9,7.6 L4.7,13.8 C3.9,14.6 2.9,14.9 2.2,14.3 Z" stroke="#fff" stroke-width="1.2" fill="none"/><path d="M8,4.5 L11.8,8.3 M9.5,5.5 L12.3,2.7 C13.2,1.8 14.6,1.8 15.3,2.6 C16.1,3.4 16.1,4.7 15.2,5.6 L12.4,8.4 Z" stroke="#fff" stroke-width="1.3" fill="#fff"/><path d="M27,14 L38.5,2.5 M32.5,2.5 H38.5 V8.5 M27,8 V14 H33" stroke="#fff" stroke-width="1.1" fill="none"/></svg>
<div class="r" style="left:962.5px;top:490.9px;width:341.0px;height:1.3px;background:#28aef2"></div>
<div class="t" style="left:982.0px;top:472.00px;font-size:16px;line-height:21px;color:#5e5e5e;letter-spacing:0px;">order_item_id</div>
<div class="t" style="left:1176.5px;top:472.00px;font-size:16px;line-height:21px;color:#9a9a9a;letter-spacing:0px;">pk</div>
<div class="t" style="left:1220.0px;top:472.00px;font-size:16px;line-height:21px;color:#9a9a9a;letter-spacing:0px;">&lt;</div>
<div class="t" style="left:1221.9px;width:80px;text-align:center;top:472.00px;font-size:16px;line-height:21px;color:#9a9a9a;letter-spacing:0px;">int</div>
<div class="t" style="left:1295.5px;top:472.00px;font-size:16px;line-height:21px;color:#9a9a9a;letter-spacing:0px;">&gt;</div>
<div class="t" style="left:982.0px;top:491.00px;font-size:16px;line-height:21px;color:#5e5e5e;letter-spacing:0px;">order_item_order_id</div>
<div class="t" style="left:1176.5px;top:491.00px;font-size:16px;line-height:21px;color:#9a9a9a;letter-spacing:0px;">fk</div>
<div class="t" style="left:1220.0px;top:491.00px;font-size:16px;line-height:21px;color:#9a9a9a;letter-spacing:0px;">&lt;</div>
<div class="t" style="left:1221.9px;width:80px;text-align:center;top:491.00px;font-size:16px;line-height:21px;color:#9a9a9a;letter-spacing:0px;">int</div>
<div class="t" style="left:1295.5px;top:491.00px;font-size:16px;line-height:21px;color:#9a9a9a;letter-spacing:0px;">&gt;</div>
<div class="t" style="left:982.0px;top:509.00px;font-size:16px;line-height:21px;color:#5e5e5e;letter-spacing:0px;">order_item_product_id</div>
<div class="t" style="left:1176.5px;top:509.00px;font-size:16px;line-height:21px;color:#9a9a9a;letter-spacing:0px;">fk</div>
<div class="t" style="left:1220.0px;top:509.00px;font-size:16px;line-height:21px;color:#9a9a9a;letter-spacing:0px;">&lt;</div>
<div class="t" style="left:1221.9px;width:80px;text-align:center;top:509.00px;font-size:16px;line-height:21px;color:#9a9a9a;letter-spacing:0px;">int</div>
<div class="t" style="left:1295.5px;top:509.00px;font-size:16px;line-height:21px;color:#9a9a9a;letter-spacing:0px;">&gt;</div>
<div class="t" style="left:982.0px;top:526.00px;font-size:16px;line-height:21px;color:#5e5e5e;letter-spacing:0px;">order_item_quantity</div>
<div class="t" style="left:1220.0px;top:526.00px;font-size:16px;line-height:21px;color:#9a9a9a;letter-spacing:0px;">&lt;</div>
<div class="t" style="left:1221.9px;width:80px;text-align:center;top:526.00px;font-size:16px;line-height:21px;color:#9a9a9a;letter-spacing:0px;">tinyint</div>
<div class="t" style="left:1295.5px;top:526.00px;font-size:16px;line-height:21px;color:#9a9a9a;letter-spacing:0px;">&gt;</div>
<div class="t" style="left:982.0px;top:544.00px;font-size:16px;line-height:21px;color:#5e5e5e;letter-spacing:0px;">order_item_subtotal</div>
<div class="t" style="left:1220.0px;top:544.00px;font-size:16px;line-height:21px;color:#9a9a9a;letter-spacing:0px;">&lt;</div>
<div class="t" style="left:1221.9px;width:80px;text-align:center;top:544.00px;font-size:16px;line-height:21px;color:#9a9a9a;letter-spacing:0px;">float</div>
<div class="t" style="left:1295.5px;top:544.00px;font-size:16px;line-height:21px;color:#9a9a9a;letter-spacing:0px;">&gt;</div>
<div class="t" style="left:982.0px;top:561.00px;font-size:16px;line-height:21px;color:#5e5e5e;letter-spacing:0px;">order_item_product_price</div>
<div class="t" style="left:1220.0px;top:561.00px;font-size:16px;line-height:21px;color:#9a9a9a;letter-spacing:0px;">&lt;</div>
<div class="t" style="left:1221.9px;width:80px;text-align:center;top:561.00px;font-size:16px;line-height:21px;color:#9a9a9a;letter-spacing:0px;">float</div>
<div class="t" style="left:1295.5px;top:561.00px;font-size:16px;line-height:21px;color:#9a9a9a;letter-spacing:0px;">&gt;</div>
<svg class="r" style="left:1295.5px;top:571.7px" width="22" height="22" viewBox="0 0 22 22"><path d="M19.5,1 V19.5 H1" stroke="#b3b3b3" stroke-width="2.2" fill="none"/></svg>
<div class="r" style="left:538.3px;top:690px;width:316.30000000000007px;height:194.60000000000002px;background:#fff;border:1.3px solid #1ea4f0;border-radius:4px;box-sizing:border-box;box-shadow:1px 1px 2px rgba(0,0,0,0.18);overflow:hidden"><div class="r" style="left:0;top:0;width:100%;height:22.5px;background:#2196f3;border-top:1.5px solid #6cc4f2;box-sizing:border-box"></div></div>
<div class="t" style="left:596.45px;top:693px;width:200px;text-align:center;font-size:16px;line-height:21px;font-weight:bold;color:#fff;letter-spacing:-0.5px">customers</div>
<svg class="r" style="left:809.6px;top:695.5px" width="40" height="16" viewBox="0 0 40 16"><path d="M2.2,14.3 C1.3,13.4 1.6,12.3 2.4,11.5 L8.6,5.3 L10.9,7.6 L4.7,13.8 C3.9,14.6 2.9,14.9 2.2,14.3 Z" stroke="#fff" stroke-width="1.2" fill="none"/><path d="M8,4.5 L11.8,8.3 M9.5,5.5 L12.3,2.7 C13.2,1.8 14.6,1.8 15.3,2.6 C16.1,3.4 16.1,4.7 15.2,5.6 L12.4,8.4 Z" stroke="#fff" stroke-width="1.3" fill="#fff"/><path d="M27,14 L38.5,2.5 M32.5,2.5 H38.5 V8.5 M27,8 V14 H33" stroke="#fff" stroke-width="1.1" fill="none"/></svg>
<div class="r" style="left:545.3px;top:735.9px;width:301.30000000000007px;height:1.3px;background:#28aef2"></div>
<div class="t" style="left:564.8px;top:717.00px;font-size:16px;line-height:21px;color:#5e5e5e;letter-spacing:0px;">customer_id</div>
<div class="t" style="left:719.6px;top:717.00px;font-size:16px;line-height:21px;color:#9a9a9a;letter-spacing:0px;">pk</div>
<div class="t" style="left:763.1px;top:717.00px;font-size:16px;line-height:21px;color:#9a9a9a;letter-spacing:0px;">&lt;</div>
<div class="t" style="left:765.0px;width:80px;text-align:center;top:717.00px;font-size:16px;line-height:21px;color:#9a9a9a;letter-spacing:0px;">int</div>
<div class="t" style="left:838.6px;top:717.00px;font-size:16px;line-height:21px;color:#9a9a9a;letter-spacing:0px;">&gt;</div>
<div class="t" style="left:564.8px;top:736.00px;font-size:16px;line-height:21px;color:#5e5e5e;letter-spacing:0px;">customer_fname</div>
<div class="t" style="left:763.1px;top:736.00px;font-size:16px;line-height:21px;color:#9a9a9a;letter-spacing:0px;">&lt;</div>
<div class="t" style="left:765.0px;width:80px;text-align:center;top:736.00px;font-size:16px;line-height:21px;color:#9a9a9a;letter-spacing:0px;">varchar</div>
<div class="t" style="left:838.6px;top:736.00px;font-size:16px;line-height:21px;color:#9a9a9a;letter-spacing:0px;">&gt;</div>
<div class="t" style="left:564.8px;top:754.00px;font-size:16px;line-height:21px;color:#5e5e5e;letter-spacing:0px;">customer_lname</div>
<div class="t" style="left:763.1px;top:754.00px;font-size:16px;line-height:21px;color:#9a9a9a;letter-spacing:0px;">&lt;</div>
<div class="t" style="left:765.0px;width:80px;text-align:center;top:754.00px;font-size:16px;line-height:21px;color:#9a9a9a;letter-spacing:0px;">varchar</div>
<div class="t" style="left:838.6px;top:754.00px;font-size:16px;line-height:21px;color:#9a9a9a;letter-spacing:0px;">&gt;</div>
<div class="t" style="left:564.8px;top:771.00px;font-size:16px;line-height:21px;color:#5e5e5e;letter-spacing:0px;">customer_email</div>
<div class="t" style="left:763.1px;top:771.00px;font-size:16px;line-height:21px;color:#9a9a9a;letter-spacing:0px;">&lt;</div>
<div class="t" style="left:765.0px;width:80px;text-align:center;top:771.00px;font-size:16px;line-height:21px;color:#9a9a9a;letter-spacing:0px;">varchar</div>
<div class="t" style="left:838.6px;top:771.00px;font-size:16px;line-height:21px;color:#9a9a9a;letter-spacing:0px;">&gt;</div>
<div class="t" style="left:564.8px;top:789.00px;font-size:16px;line-height:21px;color:#5e5e5e;letter-spacing:0px;">customer_password</div>
<div class="t" style="left:763.1px;top:789.00px;font-size:16px;line-height:21px;color:#9a9a9a;letter-spacing:0px;">&lt;</div>
<div class="t" style="left:765.0px;width:80px;text-align:center;top:789.00px;font-size:16px;line-height:21px;color:#9a9a9a;letter-spacing:0px;">varchar</div>
<div class="t" style="left:838.6px;top:789.00px;font-size:16px;line-height:21px;color:#9a9a9a;letter-spacing:0px;">&gt;</div>
<div class="t" style="left:564.8px;top:806.00px;font-size:16px;line-height:21px;color:#5e5e5e;letter-spacing:0px;">customer_street</div>
<div class="t" style="left:763.1px;top:806.00px;font-size:16px;line-height:21px;color:#9a9a9a;letter-spacing:0px;">&lt;</div>
<div class="t" style="left:765.0px;width:80px;text-align:center;top:806.00px;font-size:16px;line-height:21px;color:#9a9a9a;letter-spacing:0px;">varchar</div>
<div class="t" style="left:838.6px;top:806.00px;font-size:16px;line-height:21px;color:#9a9a9a;letter-spacing:0px;">&gt;</div>
<div class="t" style="left:564.8px;top:824.00px;font-size:16px;line-height:21px;color:#5e5e5e;letter-spacing:0px;">customer_city</div>
<div class="t" style="left:763.1px;top:824.00px;font-size:16px;line-height:21px;color:#9a9a9a;letter-spacing:0px;">&lt;</div>
<div class="t" style="left:765.0px;width:80px;text-align:center;top:824.00px;font-size:16px;line-height:21px;color:#9a9a9a;letter-spacing:0px;">varchar</div>
<div class="t" style="left:838.6px;top:824.00px;font-size:16px;line-height:21px;color:#9a9a9a;letter-spacing:0px;">&gt;</div>
<div class="t" style="left:564.8px;top:841.00px;font-size:16px;line-height:21px;color:#5e5e5e;letter-spacing:0px;">customer_state</div>
<div class="t" style="left:763.1px;top:841.00px;font-size:16px;line-height:21px;color:#9a9a9a;letter-spacing:0px;">&lt;</div>
<div class="t" style="left:765.0px;width:80px;text-align:center;top:841.00px;font-size:16px;line-height:21px;color:#9a9a9a;letter-spacing:0px;">varchar</div>
<div class="t" style="left:838.6px;top:841.00px;font-size:16px;line-height:21px;color:#9a9a9a;letter-spacing:0px;">&gt;</div>
<div class="t" style="left:564.8px;top:859.00px;font-size:16px;line-height:21px;color:#5e5e5e;letter-spacing:0px;">customer_zipcode</div>
<div class="t" style="left:763.1px;top:859.00px;font-size:16px;line-height:21px;color:#9a9a9a;letter-spacing:0px;">&lt;</div>
<div class="t" style="left:765.0px;width:80px;text-align:center;top:859.00px;font-size:16px;line-height:21px;color:#9a9a9a;letter-spacing:0px;">varchar</div>
<div class="t" style="left:838.6px;top:859.00px;font-size:16px;line-height:21px;color:#9a9a9a;letter-spacing:0px;">&gt;</div>
<svg class="r" style="left:838.6px;top:868.6px" width="22" height="22" viewBox="0 0 22 22"><path d="M19.5,1 V19.5 H1" stroke="#b3b3b3" stroke-width="2.2" fill="none"/></svg>
<div class="r" style="left:979.8px;top:690px;width:307.4000000000001px;height:107.5px;background:#e9f4fc;border:1.3px solid #1ea4f0;border-radius:4px;box-sizing:border-box;box-shadow:1px 1px 2px rgba(0,0,0,0.18);overflow:hidden"><div class="r" style="left:0;top:0;width:100%;height:22.5px;background:#2196f3;border-top:1.5px solid #6cc4f2;box-sizing:border-box"></div></div>
<div class="t" style="left:1033.5px;top:693px;width:200px;text-align:center;font-size:16px;line-height:21px;font-weight:bold;color:#fff;letter-spacing:-0.5px">orders</div>
<svg class="r" style="left:1242.2px;top:695.5px" width="40" height="16" viewBox="0 0 40 16"><path d="M2.2,14.3 C1.3,13.4 1.6,12.3 2.4,11.5 L8.6,5.3 L10.9,7.6 L4.7,13.8 C3.9,14.6 2.9,14.9 2.2,14.3 Z" stroke="#fff" stroke-width="1.2" fill="none"/><path d="M8,4.5 L11.8,8.3 M9.5,5.5 L12.3,2.7 C13.2,1.8 14.6,1.8 15.3,2.6 C16.1,3.4 16.1,4.7 15.2,5.6 L12.4,8.4 Z" stroke="#fff" stroke-width="1.3" fill="#fff"/><path d="M27,14 L38.5,2.5 M32.5,2.5 H38.5 V8.5 M27,8 V14 H33" stroke="#fff" stroke-width="1.1" fill="none"/></svg>
<div class="r" style="left:986.8px;top:735.9px;width:292.4000000000001px;height:1.3px;background:#28aef2"></div>
<div class="t" style="left:1006.3px;top:717.00px;font-size:16px;line-height:21px;color:#5e5e5e;letter-spacing:0px;">order_id</div>
<div class="t" style="left:1152.2px;top:717.00px;font-size:16px;line-height:21px;color:#9a9a9a;letter-spacing:0px;">pk</div>
<div class="t" style="left:1195.7px;top:717.00px;font-size:16px;line-height:21px;color:#9a9a9a;letter-spacing:0px;">&lt;</div>
<div class="t" style="left:1197.6000000000001px;width:80px;text-align:center;top:717.00px;font-size:16px;line-height:21px;color:#9a9a9a;letter-spacing:0px;">int</div>
<div class="t" style="left:1271.2px;top:717.00px;font-size:16px;line-height:21px;color:#9a9a9a;letter-spacing:0px;">&gt;</div>
<div class="t" style="left:1006.3px;top:736.00px;font-size:16px;line-height:21px;color:#5e5e5e;letter-spacing:0px;">order_date</div>
<div class="t" style="left:1195.7px;top:736.00px;font-size:16px;line-height:21px;color:#9a9a9a;letter-spacing:0px;">&lt;</div>
<div class="t" style="left:1197.6000000000001px;width:80px;text-align:center;top:736.00px;font-size:16px;line-height:21px;color:#9a9a9a;letter-spacing:0px;">dt</div>
<div class="t" style="left:1271.2px;top:736.00px;font-size:16px;line-height:21px;color:#9a9a9a;letter-spacing:0px;">&gt;</div>
<div class="t" style="left:1006.3px;top:754.00px;font-size:16px;line-height:21px;color:#5e5e5e;letter-spacing:0px;">order_customer_id</div>
<div class="t" style="left:1152.2px;top:754.00px;font-size:16px;line-height:21px;color:#9a9a9a;letter-spacing:0px;">fk</div>
<div class="t" style="left:1195.7px;top:754.00px;font-size:16px;line-height:21px;color:#9a9a9a;letter-spacing:0px;">&lt;</div>
<div class="t" style="left:1197.6000000000001px;width:80px;text-align:center;top:754.00px;font-size:16px;line-height:21px;color:#9a9a9a;letter-spacing:0px;">int</div>
<div class="t" style="left:1271.2px;top:754.00px;font-size:16px;line-height:21px;color:#9a9a9a;letter-spacing:0px;">&gt;</div>
<div class="t" style="left:1006.3px;top:771.00px;font-size:16px;line-height:21px;color:#5e5e5e;letter-spacing:0px;">order_status</div>
<div class="t" style="left:1195.7px;top:771.00px;font-size:16px;line-height:21px;color:#9a9a9a;letter-spacing:0px;">&lt;</div>
<div class="t" style="left:1197.6000000000001px;width:80px;text-align:center;top:771.00px;font-size:16px;line-height:21px;color:#9a9a9a;letter-spacing:0px;">varchar</div>
<div class="t" style="left:1271.2px;top:771.00px;font-size:16px;line-height:21px;color:#9a9a9a;letter-spacing:0px;">&gt;</div>
<svg class="r" style="left:1271.2px;top:781.5px" width="22" height="22" viewBox="0 0 22 22"><path d="M19.5,1 V19.5 H1" stroke="#b3b3b3" stroke-width="2.2" fill="none"/></svg>
<div class="r" style="left:1340px;top:144px;width:151px;height:68px;background:#fff;box-shadow:0 2px 3px rgba(0,0,0,0.2)"></div>
<svg class="r" style="left:1347px;top:151px" width="16" height="16" viewBox="0 0 16 16"><rect x="1.5" y="1.5" width="12.5" height="12.5" rx="2" fill="#e8e8e8" stroke="#aaa" stroke-width="1"/><path d="M3.8,7.8 L6.5,10.5 L11.8,3.8" stroke="#333" stroke-width="2" fill="none"/></svg>
<svg class="r" style="left:1347px;top:185px" width="16" height="16" viewBox="0 0 16 16"><rect x="1.5" y="1.5" width="12.5" height="12.5" rx="2" fill="#e8e8e8" stroke="#aaa" stroke-width="1"/><path d="M3.8,7.8 L6.5,10.5 L11.8,3.8" stroke="#333" stroke-width="2" fill="none"/></svg>
<div class="t" style="left:1370px;top:149.00px;font-size:16px;line-height:21px;color:#333;letter-spacing:0px;">Show all</div>
<div class="t" style="left:1370px;top:183.00px;font-size:16px;line-height:21px;color:#333;letter-spacing:0px;">DataCo</div>
<div class="r" style="left:1434px;top:185px;width:25px;height:17px;background:#ffcdbf;border:1.2px solid #ff5a2a;box-sizing:border-box"></div>
<svg class="r" style="left:1466px;top:186px" width="16" height="16" viewBox="0 0 16 16"><path d="M1.5,1.5 L14,14 M14,1.5 L1.5,14" stroke="#777" stroke-width="1.1"/></svg>
<div class="r" style="left:1491px;top:144px;width:9px;height:833px;background:#e9e9e9;border-left:1px solid #c4c4c4;box-sizing:border-box"></div>
<div class="r" style="left:1493px;top:144px;width:7px;height:37px;background:#c9c9c9;border-radius:0 0 4px 4px"></div>
<div class="r" style="left:443px;top:977px;width:1048px;height:10px;background:#e9e9e9"></div>
<div class="r" style="left:443px;top:977px;width:57px;height:10px;background:#cbcbcb;border-radius:0 5px 5px 0"></div>
<div class="r" style="left:1491px;top:977px;width:9px;height:10px;background:#fff"></div>
<svg class="r" style="left:443px;top:987px" width="700" height="29" viewBox="0 0 700 29"><path d="M418,0 H656 C651,1 650,4 648.5,9 L645.5,20 C644,25 642,28 637,28 H434 C430,28 429,25 427.5,20 L424,8 C423,4 422,1 418,0 Z" fill="#dedede"/><path d="M225,0 H418 C422,1 423,4 424,8 L427.5,20 C429,25 430,28 434,28 H208 C212,28 214,25 215.5,20 L219,8 C220,4 221,1 225,0 Z" fill="#dcdcdc"/><path d="M418,0 C422,1 423,4 424,8 L427.5,20 C429,25 430,28 434,28" stroke="#cfcfcf" stroke-width="1" fill="none"/><path d="M225,0 C221,1 220,4 219,8 L215.5,20 C214,25 212,28 208,28" stroke="#cfcfcf" stroke-width="1" fill="none"/><path d="M0,0 H225 C221,1 220,4 219,8 L215.5,20 C214,25 212,28 208,28 H0 Z" fill="#f8f8f8"/><path d="M0,28.5 H208" stroke="#e2e2e2" stroke-width="1"/></svg>
<div class="t" style="left:463px;top:990.00px;font-size:16px;line-height:21px;color:#444;letter-spacing:0px;">ER Diagram</div>
<div class="t" style="left:678px;top:990.00px;font-size:16px;line-height:21px;color:#444;letter-spacing:0px;">Model Definitions</div>
<div class="t" style="left:893px;top:990.00px;font-size:16px;line-height:21px;color:#444;letter-spacing:0px;">HiveQL Script</div>
<div class="r" style="left:1504.5px;top:556px;width:4px;height:4px;background:#666;border-radius:50%"></div>
<div class="r" style="left:1504.5px;top:563.5px;width:4px;height:4px;background:#666;border-radius:50%"></div>
<div class="r" style="left:1504.5px;top:571px;width:4px;height:4px;background:#666;border-radius:50%"></div>
<div class="r" style="left:1513px;top:117px;width:395px;height:898px;background:#efefef;border:1px solid #d6d6d6;border-top:none;box-sizing:border-box"></div>
<div class="r" style="left:1513px;top:117px;width:395px;height:27px;background:#9e9e9e"></div>
<div class="t" style="left:1519px;top:121.00px;font-size:16px;line-height:21px;color:#fff;letter-spacing:0px;">Properties</div>
<div class="r" style="left:1514px;top:181px;width:392px;height:1px;background:#d9d9d9"></div>
<div class="r" style="left:1514px;top:216px;width:392px;height:1px;background:#d9d9d9"></div>
<div class="r" style="left:1514px;top:252px;width:392px;height:1px;background:#d9d9d9"></div>
<div class="r" style="left:1514px;top:289px;width:392px;height:1px;background:#d9d9d9"></div>
<div class="r" style="left:1514px;top:325px;width:392px;height:1px;background:#d9d9d9"></div>
<div class="r" style="left:1514px;top:361px;width:392px;height:1px;background:#d9d9d9"></div>
<div class="r" style="left:1514px;top:397px;width:392px;height:1px;background:#d9d9d9"></div>
<div class="r" style="left:1514px;top:434px;width:392px;height:1px;background:#d9d9d9"></div>
<div class="r" style="left:1514px;top:470px;width:392px;height:1px;background:#d9d9d9"></div>
<div class="r" style="left:1514px;top:507px;width:392px;height:1px;background:#d9d9d9"></div>
<div class="r" style="left:1514px;top:565px;width:392px;height:1px;background:#d9d9d9"></div>
<div class="r" style="left:1514px;top:601px;width:392px;height:1px;background:#d9d9d9"></div>
<div class="r" style="left:1514px;top:638px;width:392px;height:1px;background:#d9d9d9"></div>
<div class="r" style="left:1514px;top:674px;width:392px;height:1px;background:#d9d9d9"></div>
<div class="r" style="left:1514px;top:711px;width:392px;height:1px;background:#d9d9d9"></div>
<div class="r" style="left:1514px;top:746px;width:392px;height:1px;background:#d9d9d9"></div>
<div class="r" style="left:1514px;top:782px;width:392px;height:1px;background:#d9d9d9"></div>
<div class="r" style="left:1514px;top:819px;width:392px;height:1px;background:#d9d9d9"></div>
<div class="r" style="left:1514px;top:856px;width:392px;height:1px;background:#d9d9d9"></div>
<div class="r" style="left:1514px;top:892px;width:392px;height:1px;background:#d9d9d9"></div>
<div class="r" style="left:1514px;top:928px;width:392px;height:1px;background:#d9d9d9"></div>
<div class="r" style="left:1677px;top:145px;width:1px;height:783.6px;background:#d9d9d9"></div>
<div class="t" style="left:1520px;top:152.00px;font-size:16px;line-height:21px;color:#444;letter-spacing:0px;">Table</div>
<div class="r" style="left:1697px;top:151px;width:191px;height:24.5px;background:#fff"></div>
<div class="t" style="left:1704.5px;top:152.00px;font-size:16px;line-height:21px;color:#3c3c3c;letter-spacing:0px;">orders</div>
<div class="t" style="left:1520px;top:189.00px;font-size:16px;line-height:21px;color:#444;letter-spacing:0px;">Technical name</div>
<div class="r" style="left:1697px;top:187px;width:191px;height:24.5px;background:#fff"></div>
<div class="t" style="left:1520px;top:225.00px;font-size:16px;line-height:21px;color:#444;letter-spacing:0px;">Id</div>
<div class="r" style="left:1697px;top:223px;width:191px;height:24.5px;background:#fff"></div>
<div class="t" style="left:1520px;top:261.00px;font-size:16px;line-height:21px;color:#444;letter-spacing:0px;">Description</div>
<div class="r" style="left:1697px;top:259px;width:191px;height:24.5px;background:#fff"></div>
<div class="r" style="left:1698px;top:260px;width:161px;height:22.5px;background:#f2f2f2"></div>
<div class="t" style="left:1867.8px;top:261.00px;font-size:16px;line-height:21px;color:#333;letter-spacing:-0.4px;">...</div>
<div class="t" style="left:1704.5px;top:261.00px;font-size:16px;line-height:21px;color:#3c3c3c;letter-spacing:-0.3px;">Table of customer or...</div>
<div class="t" style="left:1520px;top:297.00px;font-size:16px;line-height:21px;color:#444;letter-spacing:0px;">Database</div>
<div class="r" style="left:1697px;top:296px;width:191px;height:24.5px;background:#fff"></div>
<div class="t" style="left:1704.5px;top:297.00px;font-size:16px;line-height:21px;color:#3c3c3c;letter-spacing:0px;">DataCo</div>
<svg class="r" style="left:1864px;top:304px" width="14" height="9" viewBox="0 0 14 9"><path d="M1,1.5 L7,7.5 L13,1.5" stroke="#555" stroke-width="1.2" fill="none"/></svg>
<div class="t" style="left:1520px;top:334.00px;font-size:16px;line-height:21px;color:#444;letter-spacing:0px;">Additional properties</div>
<svg class="r" style="left:1696px;top:338px" width="16" height="16" viewBox="0 0 16 16"><rect x="1.5" y="1.5" width="13" height="13" rx="2" fill="#e6e6e6" stroke="#acacac" stroke-width="1"/></svg>
<div class="t" style="left:1520px;top:370.00px;font-size:16px;line-height:21px;color:#444;letter-spacing:0px;">Temporary</div>
<svg class="r" style="left:1696px;top:374px" width="16" height="16" viewBox="0 0 16 16"><rect x="1.5" y="1.5" width="13" height="13" rx="2" fill="#e6e6e6" stroke="#acacac" stroke-width="1"/></svg>
<div class="t" style="left:1520px;top:406.00px;font-size:16px;line-height:21px;color:#444;letter-spacing:0px;">External</div>
<svg class="r" style="left:1696px;top:411px" width="16" height="16" viewBox="0 0 16 16"><rect x="1.5" y="1.5" width="13" height="13" rx="2" fill="#e6e6e6" stroke="#acacac" stroke-width="1"/><path d="M4,8 L6.8,10.8 L12,4.3" stroke="#333" stroke-width="2" fill="none"/></svg>
<div class="t" style="left:1520px;top:443.00px;font-size:16px;line-height:21px;color:#444;letter-spacing:0px;">Stored as</div>
<div class="r" style="left:1697px;top:441px;width:191px;height:24.5px;background:#fff"></div>
<div class="t" style="left:1704.5px;top:443.00px;font-size:16px;line-height:21px;color:#3c3c3c;letter-spacing:0px;">Parquet</div>
<svg class="r" style="left:1864px;top:449px" width="14" height="9" viewBox="0 0 14 9"><path d="M1,1.5 L7,7.5 L13,1.5" stroke="#555" stroke-width="1.2" fill="none"/></svg>
<div class="t" style="left:1520px;top:479.00px;font-size:16px;line-height:21px;color:#444;letter-spacing:0px;">Partition key</div>
<div class="r" style="left:1697px;top:477px;width:27px;height:24.7px;background:#fff"></div>
<svg class="r" style="left:1703px;top:482px" width="14" height="14" viewBox="0 0 14 14"><path d="M7,1.5 V12.5 M1.5,7 H12.5" stroke="#777" stroke-width="1.2"/></svg>
<svg class="r" style="left:1694px;top:518px" width="18" height="38" viewBox="0 0 18 38"><polygon points="2.5,10.5 8.7,2.5 15,10.5" fill="#777"/><polygon points="2.5,28 8.7,35.5 15,28" fill="#777"/></svg>
<div class="r" style="left:1728px;top:521px;width:160px;height:30.7px;background:#d9d9d9;border-radius:3px"></div>
<div class="t" style="left:1735.5px;top:522.00px;font-size:16px;line-height:21px;color:#3c3c3c;letter-spacing:0px;">order_id</div>
<svg class="r" style="left:1865px;top:527px" width="16" height="16" viewBox="0 0 16 16"><path d="M2.5,2.5 L13.5,13.5 M13.5,2.5 L2.5,13.5" stroke="#777" stroke-width="1.1"/></svg>
<div class="t" style="left:1520px;top:574.00px;font-size:16px;line-height:21px;color:#444;letter-spacing:0px;">Disable No Validate</div>
<svg class="r" style="left:1696px;top:578px" width="16" height="16" viewBox="0 0 16 16"><rect x="1.5" y="1.5" width="13" height="13" rx="2" fill="#e6e6e6" stroke="#acacac" stroke-width="1"/></svg>
<div class="t" style="left:1520px;top:610.00px;font-size:16px;line-height:21px;color:#444;letter-spacing:0px;">Clustering key</div>
<div class="r" style="left:1697px;top:608px;width:27px;height:24.7px;background:#fff"></div>
<svg class="r" style="left:1703px;top:613px" width="14" height="14" viewBox="0 0 14 14"><path d="M7,1.5 V12.5 M1.5,7 H12.5" stroke="#777" stroke-width="1.2"/></svg>
<div class="t" style="left:1520px;top:646.00px;font-size:16px;line-height:21px;color:#444;letter-spacing:0px;">Sorted by</div>
<div class="r" style="left:1697px;top:644px;width:27px;height:24.7px;background:#fff"></div>
<svg class="r" style="left:1703px;top:650px" width="14" height="14" viewBox="0 0 14 14"><path d="M7,1.5 V12.5 M1.5,7 H12.5" stroke="#777" stroke-width="1.2"/></svg>
<div class="t" style="left:1520px;top:683.00px;font-size:16px;line-height:21px;color:#444;letter-spacing:0px;">Number of buckets</div>
<div class="r" style="left:1697px;top:681px;width:174px;height:24.5px;background:#fff"></div>
<div class="t" style="left:1704.5px;top:683.00px;font-size:16px;line-height:21px;color:#3c3c3c;letter-spacing:0px;">5</div>
<svg class="r" style="left:1872px;top:683px" width="16" height="20" viewBox="0 0 16 20"><polygon points="3,5.5 8,1 13,5.5" fill="#666"/><polygon points="3,14 8,18.5 13,14" fill="#666"/><path d="M1,9.8 H15" stroke="#ddd" stroke-width="1"/></svg>
<div class="t" style="left:1520px;top:719.00px;font-size:16px;line-height:21px;color:#444;letter-spacing:0px;">Skewed by</div>
<div class="r" style="left:1697px;top:717px;width:27px;height:24.7px;background:#fff"></div>
<svg class="r" style="left:1703px;top:722px" width="14" height="14" viewBox="0 0 14 14"><path d="M7,1.5 V12.5 M1.5,7 H12.5" stroke="#777" stroke-width="1.2"/></svg>
<div class="t" style="left:1520px;top:755.00px;font-size:16px;line-height:21px;color:#444;letter-spacing:0px;">Skewed on</div>
<div class="r" style="left:1697px;top:753px;width:191px;height:24.5px;background:#fff"></div>
<div class="t" style="left:1520px;top:791.00px;font-size:16px;line-height:21px;color:#444;letter-spacing:0px;width:157px;overflow:hidden;white-space:nowrap">Skew stored as directo</div>
<svg class="r" style="left:1696px;top:796px" width="16" height="16" viewBox="0 0 16 16"><rect x="1.5" y="1.5" width="13" height="13" rx="2" fill="#e6e6e6" stroke="#acacac" stroke-width="1"/></svg>
<div class="t" style="left:1520px;top:828.00px;font-size:16px;line-height:21px;color:#444;letter-spacing:0px;">Location</div>
<div class="r" style="left:1697px;top:826px;width:191px;height:24.5px;background:#fff"></div>
<div class="t" style="left:1520px;top:864.00px;font-size:16px;line-height:21px;color:#444;letter-spacing:0px;">Table properties</div>
<div class="r" style="left:1697px;top:863px;width:191px;height:24.5px;background:#fff"></div>
<div class="r" style="left:1698px;top:864px;width:161px;height:22.5px;background:#f2f2f2"></div>
<div class="t" style="left:1867.8px;top:864.00px;font-size:16px;line-height:21px;color:#333;letter-spacing:-0.4px;">...</div>
<div class="t" style="left:1520px;top:900.00px;font-size:16px;line-height:21px;color:#444;letter-spacing:0px;">Comments</div>
<div class="r" style="left:1697px;top:899px;width:191px;height:24.5px;background:#fff"></div>
<div class="r" style="left:1698px;top:900px;width:161px;height:22.5px;background:#f2f2f2"></div>
<div class="t" style="left:1867.8px;top:900.00px;font-size:16px;line-height:21px;color:#333;letter-spacing:-0.4px;">...</div>
<svg class="r" style="left:1513px;top:987px" width="395" height="29" viewBox="0 0 395 29"><path d="M199,0 H394 V24 Q394,28 390,28 H188 Q193,28 194,23 L196,5 Q197,0 199,0 Z" fill="#dcdcdc"/><path d="M0,0 H209 Q205,0 204,5 L198,23 Q196,28 190,28 H2 Q0,28 0,26 Z" fill="#f8f8f8"/></svg>
<div class="t" style="left:1527px;top:990.00px;font-size:16px;line-height:21px;color:#444;letter-spacing:0px;">Details</div>
<div class="t" style="left:1723.5px;top:990.00px;font-size:16px;line-height:21px;color:#444;letter-spacing:0px;">Secondary Indexes</div>
</div></body></html>
